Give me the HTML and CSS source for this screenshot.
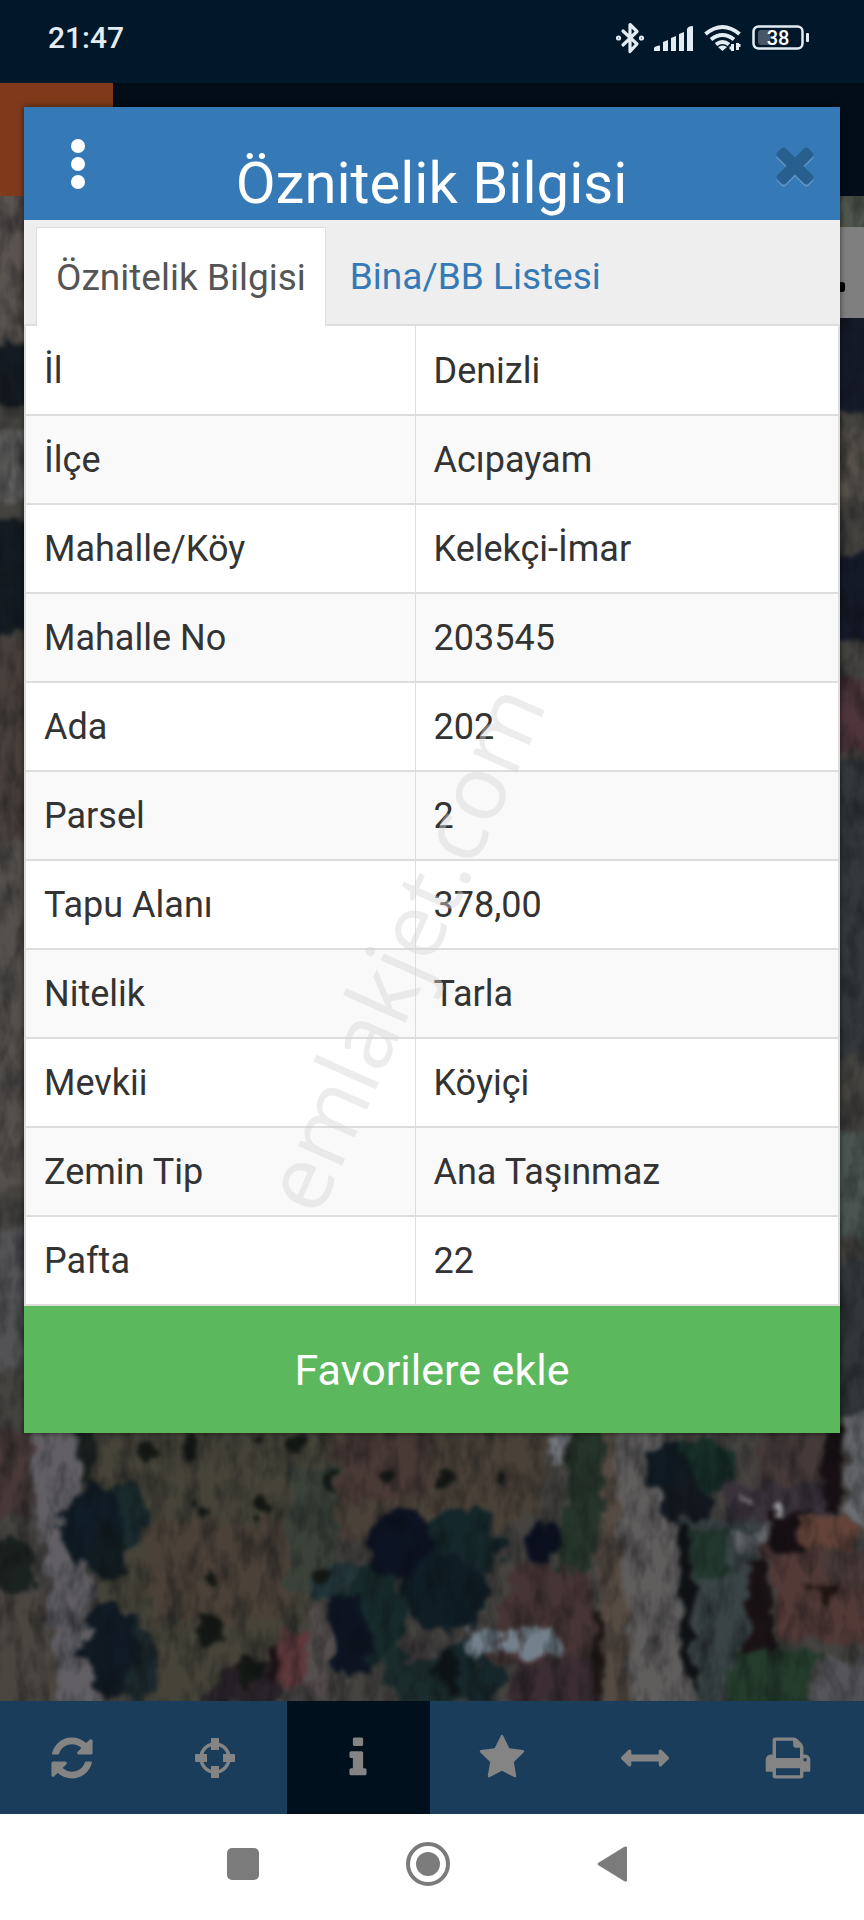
FILE: index.html
```html
<!DOCTYPE html>
<html lang="tr">

<head>
  <meta charset="utf-8">
  <meta name="viewport" content="width=device-width, initial-scale=1">
  <title>Öznitelik Bilgisi</title>
  <link rel="stylesheet" href="styles.css">
</head>

<body>
  <div class="status-bar">
    <span class="clock">21:47</span>
    <div class="status-icons">
      <svg width="28" height="32" viewBox="0 0 28 32" fill="none" stroke="#e4ecf3" stroke-width="3.2" stroke-linejoin="round" stroke-linecap="round">
        <path d="M7 9l14 13-7 7.5V2.500l7 7L7 23"/>
        <circle cx="2.500" cy="16" r="1"/>
        <circle cx="25.500" cy="16" r="1"/>
      </svg>
      <svg width="40" height="26" viewBox="0 0 40 26" fill="#e4ecf3">
        <path d="M0 26v-3q1-2 6-2.500V26zM9 26v-9l5-2v11zM17 26V13l5-2v15zM25 26V9l5-2v19zM33 26V4q1-3 6-3v25z"/>
      </svg>
      <svg width="38" height="28" viewBox="0 0 38 28" fill="none" stroke="#e4ecf3" stroke-width="4">
        <path d="M1.500 10Q18.500-4 35.500 10M7 15.500q11.500-9 23 0M12 20.500q6.500-5 13 0"/>
        <path d="M14 23q5-3 9 0l-4.500 4z" fill="#e4ecf3" stroke="none"/>
        <path d="M28.500 20v7M33.500 19v7" stroke-width="3"/>
        <path d="M25.500 24h3M33.500 21.500h3" stroke-width="3"/>
      </svg>
      <svg width="58" height="26" viewBox="0 0 58 26">
        <rect x="1.500" y="1.500" width="49" height="22" rx="5" fill="none" stroke="#e4ecf3" stroke-width="2.500"/>
        <path d="M9 5h9v15H9q-3 0-3-3V8q0-3 3-3z" fill="#485665"/>
        <rect x="54" y="8" width="3" height="9" rx="1" fill="#e4ecf3"/>
        <text x="26" y="19.500" class="battery-text">38</text>
      </svg>
    </div>
  </div>

  <div class="app">
    <header class="app-header">
      <div class="app-logo"></div>
    </header>

    <div class="map">
      <svg class="map-image" viewBox="0 196 864 1505" preserveAspectRatio="xMidYMax slice" aria-hidden="true">
        <defs>
          <filter id="rough" x="-5%" y="-5%" width="110%" height="110%" color-interpolation-filters="sRGB">
            <feTurbulence type="fractalNoise" baseFrequency="0.05" numOctaves="3" seed="4" result="n"/>
            <feDisplacementMap in="SourceGraphic" in2="n" scale="26" xChannelSelector="R" yChannelSelector="G"/>
            <feGaussianBlur stdDeviation="2"/>
          </filter>
          <filter id="grain" x="0" y="0" width="100%" height="100%" color-interpolation-filters="sRGB">
            <feTurbulence type="fractalNoise" baseFrequency="0.06 0.03" numOctaves="3" seed="9"/>
            <feColorMatrix values="0 0 0 0 0.04  0 0 0 0 0.05  0 0 0 0 0.06  1 0 0 0 -0.380"/>
          </filter>
        </defs>
        <rect y="196" width="864" height="1505" fill="#454340"/>
        <g filter="url(#rough)">
          <!-- left edge -->
          <path d="M-10 190h50v150h-50z" fill="#5a5350"/>
          <path d="M-10 345h50v60h-50zM-10 520h50v115h-50z" fill="#141b22"/>
          <path d="M-10 430h50v70h-50z" fill="#5c5b5a"/>
          <path d="M-10 640h50v200h-50z" fill="#49403c"/>
          <path d="M-10 840h50v350h-50z" fill="#54504d"/>
          <path d="M-10 1230h50v140h-50z" fill="#535356"/>
          <!-- right edge -->
          <path d="M830 190h40v40h-40z" fill="#4f564c"/>
          <path d="M830 310h40v100h-40zM830 550h40v90h-40z" fill="#151a29"/>
          <path d="M830 430h40v70h-40z" fill="#55514a"/>
          <path d="M830 680h40v70h-40z" fill="#4e353b"/>
          <path d="M830 760h40v300h-40z" fill="#35383a"/>
          <path d="M830 1130h40v110h-40z" fill="#4b5450"/>
          <path d="M830 1260h40v150h-40z" fill="#31363a"/>
          <!-- fields -->
          <path d="M85 1420h250l-20 180-40 101H110z" fill="#464439"/>
          <path d="M330 1420h220l-10 90-80 40-130-10z" fill="#4a4138"/>
          <path d="M340 1425h90v70l-95 10z" fill="#493a36"/>
          <path d="M140 1520h150v100h-140z" fill="#4b4138"/>
          <path d="M290 1470h45v120h-50z" fill="#3a423a"/>
          <path d="M-10 1430h40v90h-40z" fill="#483938"/>
          <path d="M-10 1590h70v120h-70z" fill="#4b4640"/>
          <!-- roads -->
          <path d="M28 1420h50l4 100 10 90 10 100H58l-6-110-18-90z" fill="#615f64"/>
          <path d="M610 1420h55l-5 60 20 60 8 100 10 65h-70l-10-120z" fill="#605d5d"/>
          <path d="M590 1420h22l22 285h-28z" fill="#564b42"/>
          <path d="M842 1412h30v120h-20z" fill="#6b6d70"/>
          <!-- shadows and trees -->
          <path d="M77 1425h16v65l-12-10z" fill="#19211f"/>
          <path d="M570 1425h32v90l-8 50-30 10-6-30z" fill="#26352a"/>
          <path d="M522 1545l20-26 20 20-10 26-20 12z" fill="#0b1020"/>
          <ellipse cx="122" cy="1520" rx="25" ry="34" fill="#1a2a2d"/>
          <ellipse cx="92" cy="1525" rx="31" ry="38" fill="#101c26"/>
          <ellipse cx="108" cy="1555" rx="20" ry="24" fill="#111b20"/>
          <ellipse cx="133" cy="1660" rx="25" ry="42" fill="#1b282c"/>
          <ellipse cx="110" cy="1650" rx="28" ry="44" fill="#101a24"/>
          <ellipse cx="12" cy="1565" rx="24" ry="26" fill="#1b2320"/>
          <ellipse cx="460" cy="1545" rx="42" ry="38" fill="#14272a"/>
          <ellipse cx="402" cy="1545" rx="34" ry="34" fill="#0c1322"/>
          <ellipse cx="445" cy="1595" rx="42" ry="40" fill="#0f1d25"/>
          <ellipse cx="340" cy="1585" rx="34" ry="20" fill="#23363a"/>
          <ellipse cx="372" cy="1615" rx="35" ry="48" fill="#162a2b"/>
          <ellipse cx="350" cy="1635" rx="22" ry="42" fill="#0d1422"/>
          <ellipse cx="425" cy="1675" rx="42" ry="32" fill="#1a2d2c"/>
          <ellipse cx="475" cy="1670" rx="30" ry="34" fill="#16272b"/>
          <ellipse cx="449" cy="1665" rx="10" ry="24" fill="#0d1417"/>
          <path d="M400 1640h30l14 16-40 4z" fill="#453f40"/>
          <ellipse cx="697" cy="1468" rx="40" ry="30" fill="#162e27"/>
          <ellipse cx="668" cy="1470" rx="20" ry="28" fill="#101a22"/>
          <ellipse cx="688" cy="1502" rx="26" ry="22" fill="#131920"/>
          <!-- houses -->
          <path d="M758 1425h75v85h-75z" fill="#453939"/>
          <path d="M725 1485h105v42h-105z" fill="#39323a"/>
          <path d="M826 1430h16v80h-18zM770 1518l34-8v50h-36z" fill="#170f13"/>
          <path d="M678 1520h80v180h-66l-12-60z" fill="#3a4444"/>
          <path d="M678 1525h12l8 170-14-30z" fill="#0f1113"/>
          <path d="M690 1530h40v50h-34z" fill="#22382e"/>
          <path d="M745 1560h22l10 110-26-14z" fill="#1b1215"/>
          <path d="M735 1650h85l-12 60h-80z" fill="#243c2b"/>
          <path d="M516 1565l70 5 12 95H480z" fill="#463534"/>
          <path d="M510 1662l90-6v50h-88z" fill="#3b2d33"/>
          <path d="M592 1610h10v90h-8z" fill="#1f1816"/>
          <path d="M238 1660h40v46h-80z" fill="#2a2329"/>
        </g>
        <g filter="url(#rough)">
          <path d="M800 1515h50l8 33h-60z" fill="#634339"/>
          <path d="M768 1548h110v98l-100-8z" fill="#523a37"/>
          <path d="M818 1548h50v38h-40z" fill="#493a38"/>
          <path d="M806 1584l26 4-4 14z" fill="#22150f"/>
          <path d="M280 1633h27v54h-30z" fill="#5e383b"/>
          <path d="M268 1640h11v40h-12z" fill="#1f1217"/>
          <path d="M308 1595l24 32-8 70h-18z" fill="#554e4e"/>
          <path d="M468 1630h30v26h-28zM502 1632h18v20h-18zM523 1626h36v30h-36z" fill="#74818c"/>
          <path d="M548 1432h18l-3 38h-10z" fill="#74787d"/>
          <path d="M732 1532l34-4-4 22-20 3z" fill="#63676c"/>
          <path d="M822 1660h50v45h-60z" fill="#555559"/>
          <path d="M740 1493l10 12-8 6zM776 1505h6v12h-6z" fill="#9a9c9e"/>
          <!-- bushes -->
          <g fill="#141814">
            <ellipse cx="147" cy="1452" rx="8" ry="9"/>
            <ellipse cx="190" cy="1447" rx="7" ry="10"/>
            <ellipse cx="257" cy="1440" rx="8" ry="6"/>
            <ellipse cx="295" cy="1443" rx="10" ry="9"/>
            <ellipse cx="388" cy="1478" rx="8" ry="9"/>
            <ellipse cx="445" cy="1479" rx="8" ry="9"/>
            <ellipse cx="501" cy="1476" rx="8" ry="11"/>
            <ellipse cx="202" cy="1510" rx="5" ry="9"/>
            <ellipse cx="260" cy="1505" rx="10" ry="13"/>
            <ellipse cx="329" cy="1482" rx="6" ry="8"/>
            <ellipse cx="210" cy="1576" rx="7" ry="9"/>
            <ellipse cx="210" cy="1631" rx="13" ry="17"/>
            <ellipse cx="249" cy="1672" rx="12" ry="14"/>
            <ellipse cx="320" cy="1575" rx="14" ry="11"/>
          </g>
        </g>
        <rect y="196" width="864" height="1505" filter="url(#grain)"/>
      </svg>
      <div class="map-panel"></div>
    </div>

    <nav class="toolbar">
      <button type="button" class="tool" aria-label="Yenile">
        <svg viewBox="0 0 1792 1792"><path d="M1639 1056q0 5-1 7-64 268-268 434.500t-478 166.500q-146 0-282.500-55t-243.500-157l-129 129q-19 19-45 19t-45-19-19-45v-448q0-26 19-45t45-19h448q26 0 45 19t19 45-19 45l-137 137q71 66 161 102t187 36q134 0 250-65t186-179q11-17 53-117 8-23 30-23h192q13 0 22.500 9.500t9.500 22.500zm25-800v448q0 26-19 45t-45 19h-448q-26 0-45-19t-19-45 19-45l138-138q-148-137-349-137-134 0-250 65t-186 179q-11 17-53 117-8 23-30 23h-199q-13 0-22.500-9.500t-9.500-22.500v-7q65-268 270-434.500t480-166.500q146 0 284 55.500t245 156.500l130-129q19-19 45-19t45 19 19 45z"/></svg>
      </button>
      <button type="button" class="tool" aria-label="Konum">
        <svg viewBox="0 0 48 48"><circle cx="24" cy="24" r="14" fill="none" stroke="#848484" stroke-width="3.500"/><path d="M20 4h8v12h-8zM20 32h8v12h-8zM5 20h11v8H5q-1 0-1-1v-6q0-1 1-1zM32 20h11q1 0 1 1v6q0 1-1 1H32z"/></svg>
      </button>
      <button type="button" class="tool active" aria-label="Bilgi">
        <svg viewBox="0 0 1792 1792"><path d="M1216 1344v128q0 26-19 45t-45 19h-512q-26 0-45-19t-19-45v-128q0-26 19-45t45-19h64v-384h-64q-26 0-45-19t-19-45v-128q0-26 19-45t45-19h384q26 0 45 19t19 45v576h64q26 0 45 19t19 45zm-128-1152v192q0 26-19 45t-45 19h-256q-26 0-45-19t-19-45v-192q0-26 19-45t45-19h256q26 0 45 19t19 45z"/></svg>
      </button>
      <button type="button" class="tool" aria-label="Favoriler">
        <svg viewBox="0 0 1792 1792"><path d="M1728 647q0 22-26 48l-363 354 86 500q1 7 1 20 0 21-10.500 35.500t-30.500 14.500q-19 0-40-12l-449-236-449 236q-22 12-40 12-21 0-31.500-14.500t-10.500-35.500q0-6 2-20l86-500-364-354q-25-27-25-48 0-37 56-46l502-73 225-455q19-41 49-41t49 41l225 455 502 73q56 9 56 46z"/></svg>
      </button>
      <button type="button" class="tool" aria-label="Ölçüm">
        <svg viewBox="0 0 1792 1792"><path d="M1792 896q0 26-19 45l-256 256q-19 19-45 19t-45-19-19-45v-128h-1024v128q0 26-19 45t-45 19-45-19l-256-256q-19-19-19-45t19-45l256-256q19-19 45-19t45 19 19 45v128h1024v-128q0-26 19-45t45-19 45 19l256 256q19 19 19 45z"/></svg>
      </button>
      <button type="button" class="tool" aria-label="Yazdır">
        <svg viewBox="0 0 1792 1792"><path d="M448 1536h896v-256h-896v256zm0-640h896v-384h-160q-40 0-68-28t-28-68v-160h-640v640zm1152 64q0-26-19-45t-45-19-45 19-19 45 19 45 45 19 45-19 19-45zm128 0v416q0 13-9.500 22.500t-22.500 9.500h-224v160q0 40-28 68t-68 28h-960q-40 0-68-28t-28-68v-160h-224q-13 0-22.500-9.500t-9.500-22.500v-416q0-79 56.500-135.500t135.500-56.500h64v-544q0-40 28-68t68-28h672q40 0 88 20t76 48l152 152q28 28 48 76t20 88v256h64q79 0 135.500 56.500t56.500 135.500z"/></svg>
      </button>
    </nav>

    <section class="modal" role="dialog" aria-labelledby="modalTitle">
      <div class="modal-header">
        <button type="button" class="icon-btn" aria-label="Menü">
          <svg width="16" height="52" viewBox="0 0 16 52" fill="#fff"><circle cx="8" cy="8" r="7"/><circle cx="8" cy="26" r="7"/><circle cx="8" cy="44" r="7"/></svg>
        </button>
        <h1 class="modal-title" id="modalTitle">Öznitelik Bilgisi</h1>
        <button type="button" class="icon-btn" aria-label="Kapat">
          <svg class="close-icon" width="56" height="56" viewBox="0 0 1792 1792" fill="#27608f"><path d="M1490 1322q0 40-28 68l-136 136q-28 28-68 28t-68-28l-294-294-294 294q-28 28-68 28t-68-28l-136-136q-28-28-28-68t28-68l294-294-294-294q-28-28-28-68t28-68l136-136q28-28 68-28t68 28l294 294 294-294q28-28 68-28t68 28l136 136q28 28 28 68t-28 68l-294 294 294 294q28 28 28 68z"/></svg>
        </button>
      </div>

      <div class="tabs">
        <a href="#oznitelik" class="tab active">Öznitelik Bilgisi</a>
        <a href="#bina" class="tab">Bina/BB Listesi</a>
      </div>

      <table class="info-table" id="oznitelik">
        <tbody>
          <tr><th scope="row">İl</th><td>Denizli</td></tr>
          <tr><th scope="row">İlçe</th><td>Acıpayam</td></tr>
          <tr><th scope="row">Mahalle/Köy</th><td>Kelekçi-İmar</td></tr>
          <tr><th scope="row">Mahalle No</th><td>203545</td></tr>
          <tr><th scope="row">Ada</th><td>202</td></tr>
          <tr><th scope="row">Parsel</th><td>2</td></tr>
          <tr><th scope="row">Tapu Alanı</th><td>378,00</td></tr>
          <tr><th scope="row">Nitelik</th><td>Tarla</td></tr>
          <tr><th scope="row">Mevkii</th><td>Köyiçi</td></tr>
          <tr><th scope="row">Zemin Tip</th><td>Ana Taşınmaz</td></tr>
          <tr><th scope="row">Pafta</th><td>22</td></tr>
        </tbody>
      </table>

      <button type="button" class="btn-favorite">Favorilere ekle</button>
    </section>
  </div>

  <div class="system-nav">
    <button type="button" class="nav-btn" aria-label="Son uygulamalar">
      <svg width="44" height="44" viewBox="0 0 44 44"><rect x="6" y="6" width="32" height="32" rx="5" fill="#7b7b7b"/></svg>
    </button>
    <button type="button" class="nav-btn" aria-label="Ana ekran">
      <svg width="44" height="44" viewBox="0 0 44 44"><circle cx="22" cy="22" r="20" fill="none" stroke="#7b7b7b" stroke-width="4"/><circle cx="22" cy="22" r="12" fill="#7b7b7b"/></svg>
    </button>
    <button type="button" class="nav-btn" aria-label="Geri">
      <svg width="44" height="44" viewBox="0 0 44 44"><path d="M36 5v34q-1 1-3 0L7 23q-1-1 0-2L33 5q2-1 3 0z" fill="#7b7b7b"/></svg>
    </button>
  </div>

  <div class="watermark">emlakjet.com</div>
</body>

</html>
```
FILE: styles.css
```css
* {
  box-sizing: border-box;
}

body {
  font-family: Roboto, "Noto Sans", sans-serif;
  margin: 0;
  min-height: 100vh;
  display: flex;
  flex-direction: column;
  position: relative;
  overflow-x: hidden;
  background-color: #fff;
  color: #333;
}

button {
  font-family: inherit;
  border: 0;
  padding: 0;
  background: none;
  cursor: pointer;
}

svg {
  display: block;
}

.status-bar {
  height: 83px;
  padding: 0 54px 8px 48px;
  display: flex;
  align-items: center;
  justify-content: space-between;
  background-color: #001829;
}

.clock {
  font-size: 30px;
  font-weight: 500;
  color: #e4ecf3;
}

.status-icons {
  display: flex;
  align-items: center;
  gap: 10px;
}

.battery-text {
  font-size: 20px;
  font-weight: 500;
  text-anchor: middle;
  fill: #fff;
}

.app {
  flex: 1;
  display: flex;
  flex-direction: column;
  position: relative;
}

.app-header {
  height: 113px;
  background-color: #020d17;
}

.app-logo {
  width: 113px;
  height: 113px;
  background-color: #7f3a1b;
}

.map {
  flex: 1;
  position: relative;
  min-height: 1240px;
  overflow: hidden;
  background-color: #454340;
}

.map-image {
  position: absolute;
  width: 100%;
  height: 100%;
}

.map-panel {
  position: absolute;
  top: 31px;
  right: 0;
  width: 80px;
  height: 91px;
  background-color: #7f7f7f;
}

.map-panel::after {
  content: "";
  position: absolute;
  left: 46px;
  top: 55px;
  width: 15px;
  height: 10px;
  border-radius: 3px;
  background-color: #000;
}

.toolbar {
  height: 113px;
  padding-right: 4px;
  display: flex;
  background-color: #1b3d5c;
}

.tool {
  flex: 1;
  display: flex;
  align-items: center;
  justify-content: center;
}

.tool.active {
  background-color: #00101c;
}

.tool svg {
  width: 48px;
  height: 48px;
  fill: #848484;
}

.modal {
  position: absolute;
  top: 24px;
  left: 24px;
  right: 24px;
  background-color: #fff;
  box-shadow: 0 0 6px rgba(0, 0, 0, 0.6);
}

.modal-header {
  height: 113px;
  padding: 0 17px 0 46px;
  display: flex;
  align-items: center;
  background-color: #357ab7;
}

.modal-title {
  flex: 1;
  margin: 0;
  padding: 38px 0 0 10px;
  font-size: 58px;
  font-weight: 400;
  line-height: 76px;
  text-align: center;
  color: #fff;
}

.icon-btn {
  display: flex;
}

.close-icon {
  filter: drop-shadow(0 2px 0 #6196c6);
}

.tabs {
  height: 106px;
  padding: 7px 12px 0;
  display: flex;
  background-color: #eee;
  border-bottom: 2px solid #ddd;
}

.tab {
  height: 99px;
  padding: 0 24px;
  display: flex;
  align-items: center;
  font-size: 37px;
  color: #357ab7;
  text-decoration: none;
}

.tab.active {
  padding: 0 19px;
  color: #555;
  background-color: #fff;
  border: 1px solid #ddd;
  border-bottom: 0;
}

.info-table {
  width: 100%;
  border-collapse: collapse;
  table-layout: fixed;
  font-size: 36px;
}

.info-table th,
.info-table td {
  height: 89px;
  padding: 1px 18px 0;
  border: 2px solid #ddd;
  border-top: 0;
  text-align: left;
  font-weight: 400;
}

.info-table th {
  width: 390px;
  border-right-width: 1px;
}

.info-table td {
  border-left-width: 1px;
}

.info-table tr:nth-child(even) {
  background-color: #f9f9f9;
}

.btn-favorite {
  display: block;
  width: 100%;
  height: 127px;
  font-size: 43px;
  color: #fff;
  background-color: #5cb85c;
}

.system-nav {
  height: 106px;
  padding: 0 8px 6px 0;
  display: flex;
  align-items: center;
  justify-content: center;
  background-color: #fff;
}

.nav-btn {
  width: 185px;
  display: flex;
  justify-content: center;
}

.watermark {
  position: absolute;
  top: 947px;
  left: 401px;
  font-family: "Open Sans", "Noto Sans", sans-serif;
  font-size: 90px;
  line-height: 1;
  color: rgba(211, 211, 211, 0.43);
  transform: translate(-50%, -50%) rotate(-66deg);
  pointer-events: none;
}
```
